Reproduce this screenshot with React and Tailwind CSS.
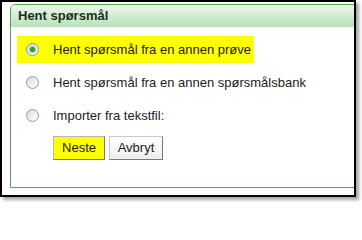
function Radio({ checked }) {
  return (
    <span className="w-[13px] h-[13px] shrink-0 rounded-full border border-[#8a9cae] bg-linear-to-br from-[#d9dcdf] to-white flex items-center justify-center">
      {checked && <span className="w-[5px] h-[5px] rounded-full bg-[#3b9e2e] shadow-[0_0_0_1px_#9fd08f]" />}
    </span>
  );
}

function Option({ label, checked, highlight }) {
  return (
    <div className={`h-[27px] flex items-center pl-[9px] gap-[14px] ${highlight ? 'w-[237px] bg-[#ffff00]' : 'w-[320px]'}`}>
      <Radio checked={checked} />
      <span className="text-[13px] text-[#222] whitespace-nowrap">{label}</span>
    </div>
  );
}

export default function App() {
  return (
    <div className="w-[362px] h-[203px] bg-white" style={{ fontFamily: '"Liberation Sans", Arial, sans-serif' }}>
      <div className="w-[356px] h-[197px] border-2 border-black overflow-hidden shadow-[3px_3px_3px_rgba(0,0,0,0.35)] pt-[2px] pl-[8px]">
        <div className="w-[360px] h-[184px] border border-[#5c9b5c] rounded-tl-[5px] overflow-hidden">
          <div className="h-[22px] pl-[7px] flex items-center bg-linear-to-b from-[#edf8ed] to-[#b7e1b7]">
            <span className="text-[13px] font-bold text-[#1c2f1c]">Hent spørsmål</span>
          </div>
          <div className="pl-[6px] pt-[9px] flex flex-col gap-[6px]">
            <Option label="Hent spørsmål fra en annen prøve" checked highlight />
            <Option label="Hent spørsmål fra en annen spørsmålsbank" />
            <Option label="Importer fra tekstfil:" />
            <div className="flex gap-[4px] pl-[36px] mt-[1px]">
              <button className="w-[52px] h-[24px] bg-[#ffff00] border border-t-[#b8b8b8] border-l-[#b8b8b8] border-r-[#7a7a7a] border-b-[#7a7a7a] text-[13px] text-[#222]">
                Neste
              </button>
              <button className="w-[54px] h-[24px] bg-linear-to-b from-white to-[#ededed] border border-t-[#c8c8c8] border-l-[#c8c8c8] border-r-[#7a7a7a] border-b-[#7a7a7a] text-[13px] text-[#222]">
                Avbryt
              </button>
            </div>
          </div>
        </div>
      </div>
    </div>
  );
}
